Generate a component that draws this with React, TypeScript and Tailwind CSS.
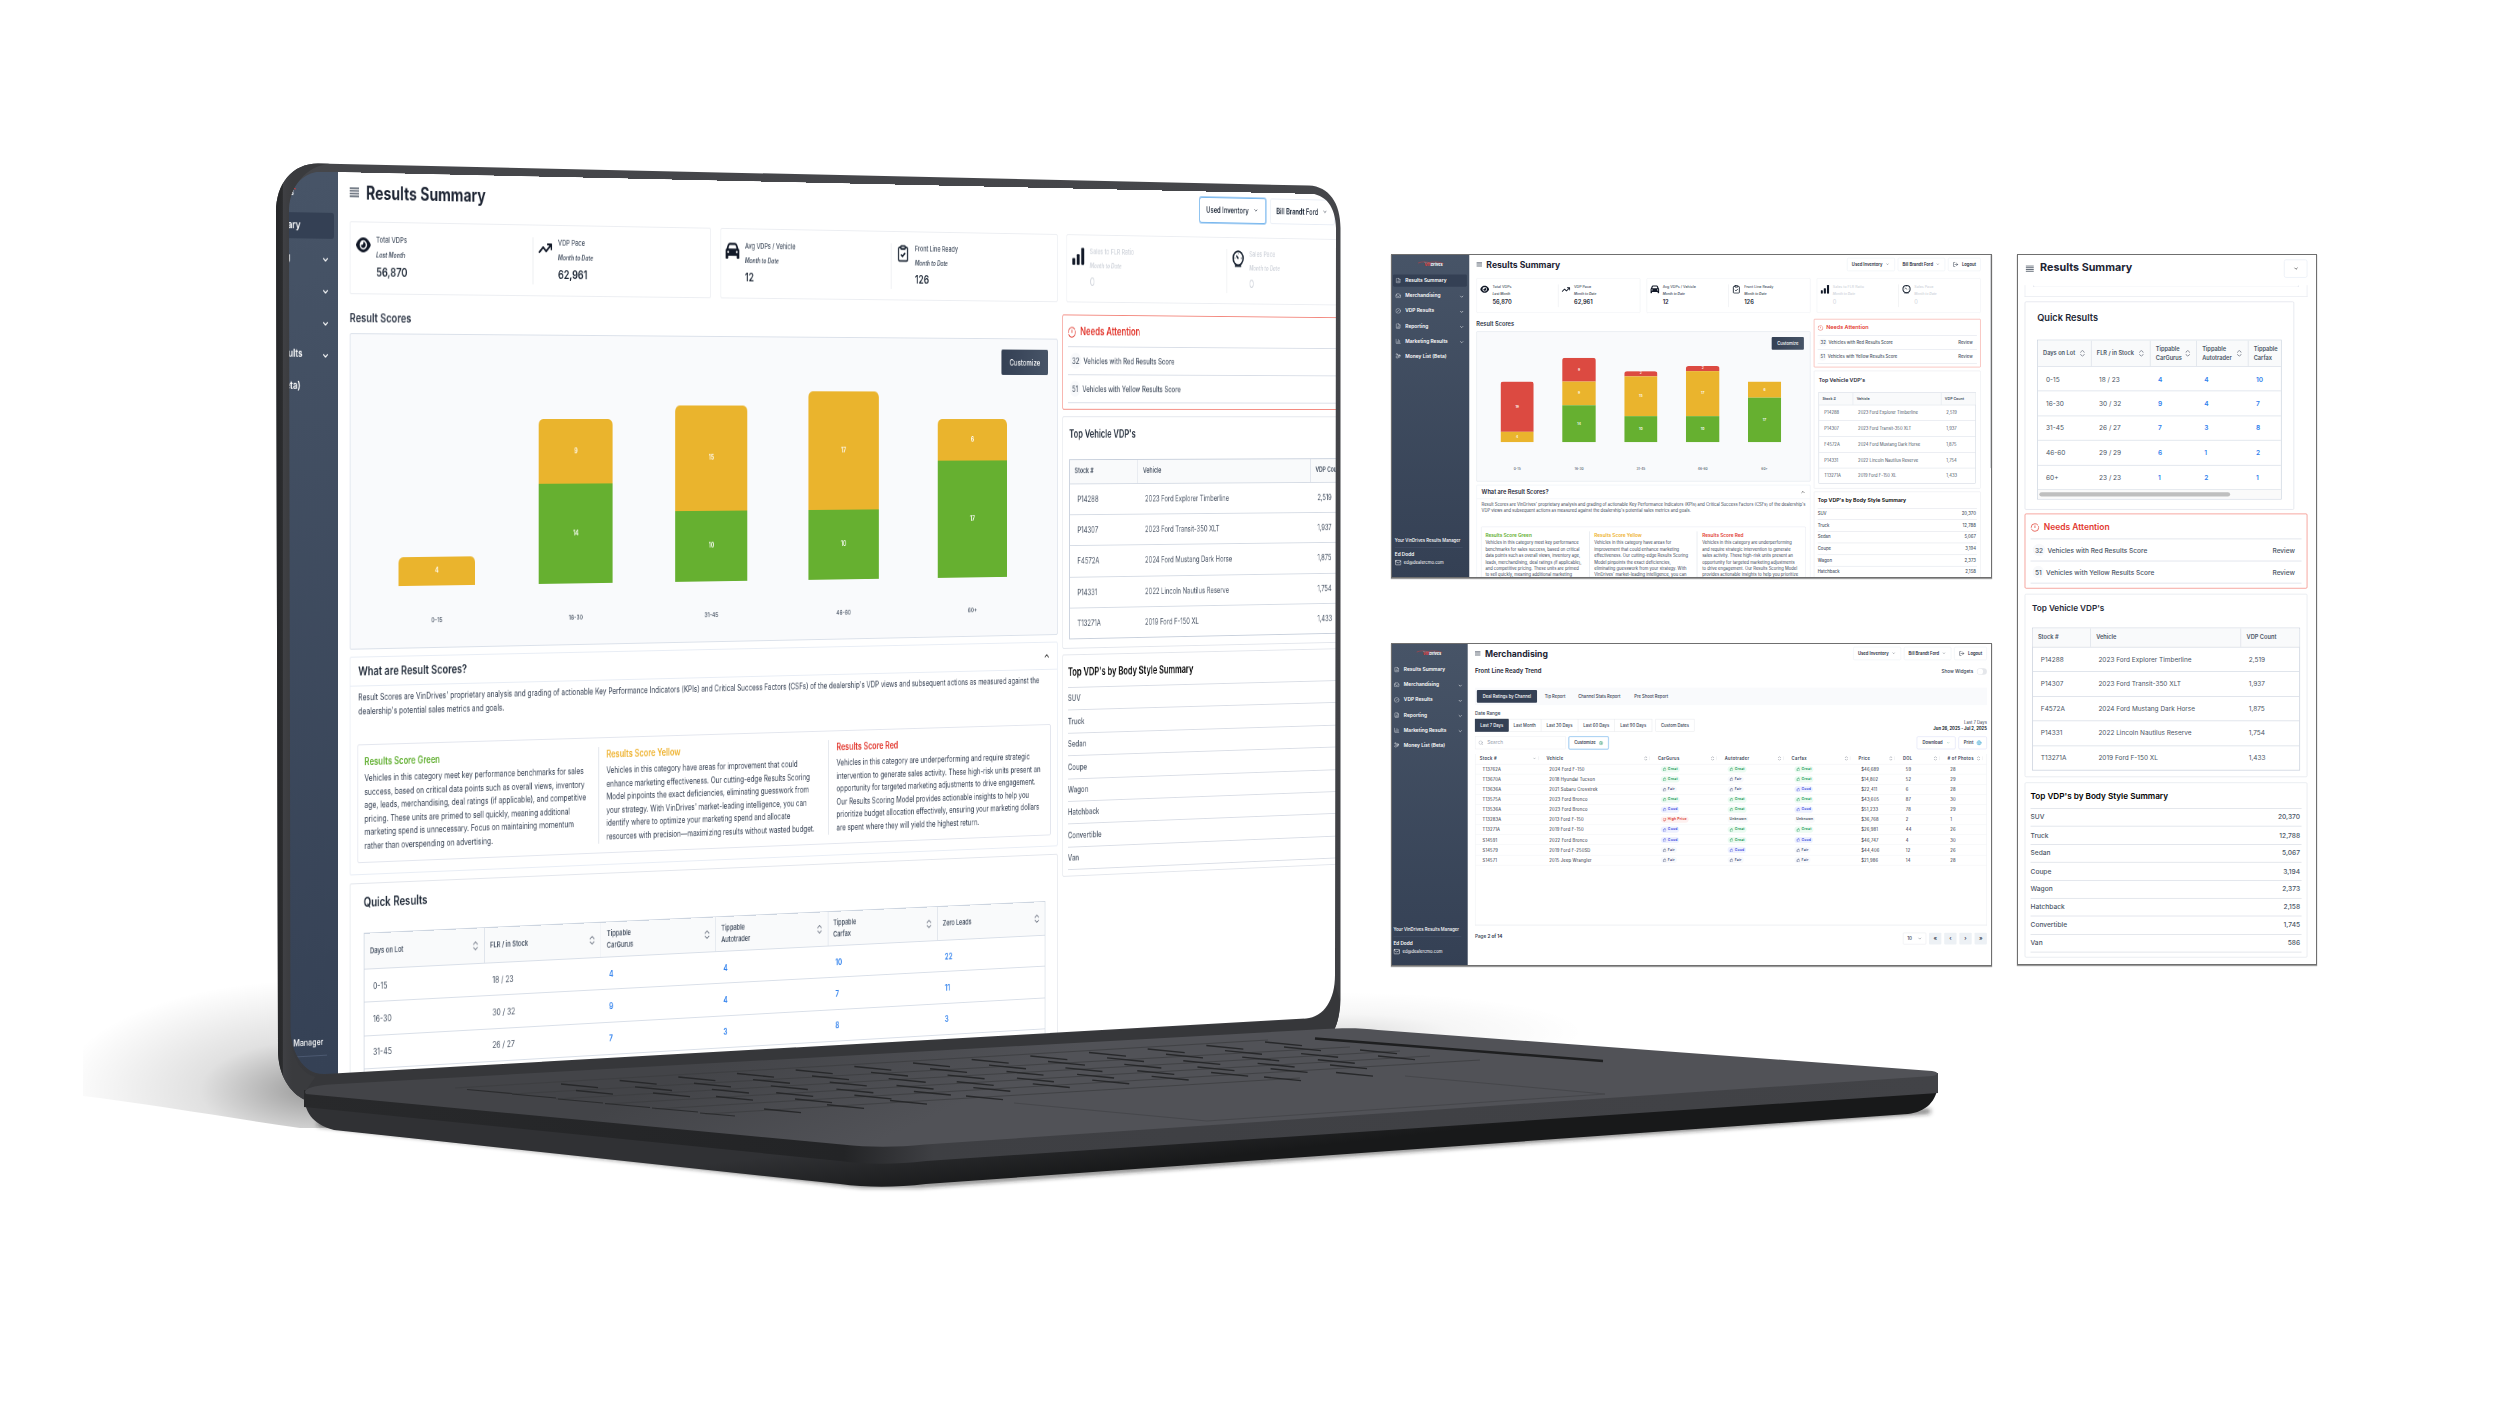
import React from "react";
import {
  ChevronDown,
  ChevronUp,
  ClipboardCheck,
  FileChartColumn,
  Inbox,
  CircleSlash,
  ChartColumn,
  HandCoins,
  LogOut,
  Mail,
  Search,
  Settings,
  Globe,
  ThumbsDown,
  ThumbsUp,
} from "lucide-react";
import { FaArrowTrendUp, FaCar, FaEye } from "react-icons/fa6";

type Bar = { label: string; red?: number; yellow: number; green?: number };

const BARS: Bar[] = [
  { label: "0-15", red: 19, yellow: 4 },
  { label: "16-30", red: 9, yellow: 9, green: 14 },
  { label: "31-45", red: 2, yellow: 15, green: 10 },
  { label: "46-60", red: 2, yellow: 17, green: 10 },
  { label: "60+", yellow: 6, green: 17 },
];

const VEHICLES = [
  ["P14288", "2023 Ford Explorer Timberline", "2,519"],
  ["P14307", "2023 Ford Transit-350 XLT", "1,937"],
  ["F4572A", "2024 Ford Mustang Dark Horse", "1,875"],
  ["P14331", "2022 Lincoln Nautilus Reserve", "1,754"],
  ["T13271A", "2019 Ford F-150 XL", "1,433"],
];

const BODY_STYLES = [
  ["SUV", "20,370"],
  ["Truck", "12,788"],
  ["Sedan", "5,067"],
  ["Coupe", "3,194"],
  ["Wagon", "2,373"],
  ["Hatchback", "2,158"],
  ["Convertible", "1,745"],
  ["Van", "586"],
];

const QUICK_HEAD = ["Days on Lot", "FLR / in Stock", "Tippable\nCarGurus", "Tippable\nAutotrader", "Tippable\nCarfax", "Zero Leads"];
const QUICK_ROWS = [
  ["0-15", "18 / 23", "4", "4", "10", "22"],
  ["16-30", "30 / 32", "9", "4", "7", "11"],
  ["31-45", "26 / 27", "7", "3", "8", "3"],
  ["46-60", "29 / 29", "6", "1", "2", "2"],
  ["60+", "23 / 23", "1", "2", "1", "1"],
];

const SCORES = [
  {
    title: "Results Score Green",
    color: "text-[#5fae2e]",
    wide: "Vehicles in this category meet key performance benchmarks for sales\nsuccess, based on critical data points such as overall views, inventory\nage, leads, merchandising, deal ratings (if applicable), and competitive\npricing. These units are primed to sell quickly, meaning additional\nmarketing spend is unnecessary. Focus on maintaining momentum\nrather than overspending on advertising.",
    narrow: "Vehicles in this category meet key performance\nbenchmarks for sales success, based on critical\ndata points such as overall views, inventory age,\nleads, merchandising, deal ratings (if applicable),\nand competitive pricing. These units are primed\nto sell quickly, meaning additional marketing",
  },
  {
    title: "Results Score Yellow",
    color: "text-[#eeb12c]",
    wide: "Vehicles in this category have areas for improvement that could\nenhance marketing effectiveness. Our cutting-edge Results Scoring\nModel pinpoints the exact deficiencies, eliminating guesswork from\nyour strategy. With VinDrives' market-leading intelligence, you can\nidentify where to optimize your marketing spend and allocate\nresources with precision—maximizing results without wasted budget.",
    narrow: "Vehicles in this category have areas for\nimprovement that could enhance marketing\neffectiveness. Our cutting-edge Results Scoring\nModel pinpoints the exact deficiencies,\neliminating guesswork from your strategy. With\nVinDrives' market-leading intelligence, you can",
  },
  {
    title: "Results Score Red",
    color: "text-[#e23c33]",
    wide: "Vehicles in this category are underperforming and require strategic\nintervention to generate sales activity. These high-risk units present an\nopportunity for targeted marketing adjustments to drive engagement.\nOur Results Scoring Model provides actionable insights to help you\nprioritize budget allocation effectively, ensuring your marketing dollars\nare spent where they will yield the highest return.",
    narrow: "Vehicles in this category are underperforming\nand require strategic intervention to generate\nsales activity. These high-risk units present an\nopportunity for targeted marketing adjustments\nto drive engagement. Our Results Scoring Model\nprovides actionable insights to help you prioritize",
  },
];

const INTRO_WIDE =
  "Result Scores are VinDrives' proprietary analysis and grading of actionable Key Performance Indicators (KPIs) and Critical Success Factors (CSFs) of the dealership's VDP views and subsequent actions as measured against the\ndealership's potential sales metrics and goals.";
const INTRO_NARROW =
  "Result Scores are VinDrives' proprietary analysis and grading of actionable Key Performance Indicators (KPIs) and Critical Success Factors (CSFs) of the dealership's\nVDP views and subsequent actions as measured against the dealership's potential sales metrics and goals.";

const LISTINGS = [
  ["T13762A", "2024 Ford F-150", "Great", "Great", "Great", "$46,689", "59", "28"],
  ["T13670A", "2018 Hyundai Tucson", "Great", "Fair", "Great", "$14,802", "52", "29"],
  ["T13636A", "2021 Subaru Crosstrek", "Fair", "Fair", "Good", "$22,411", "6", "28"],
  ["T13575A", "2023 Ford Bronco", "Great", "Great", "Great", "$43,605", "87", "30"],
  ["T13536A", "2023 Ford Bronco", "Good", "Great", "Good", "$51,233", "78", "29"],
  ["T13283A", "2013 Ford F-150", "High Price", "Unknown", "Unknown", "$36,768", "2", "1"],
  ["T13271A", "2019 Ford F-150", "Good", "Great", "Great", "$26,981", "44", "26"],
  ["S14591", "2022 Ford Bronco", "Good", "Great", "Good", "$46,747", "4", "30"],
  ["S14579", "2019 Ford F-250SD", "Fair", "Good", "Fair", "$44,406", "12", "26"],
  ["S14571", "2015 Jeep Wrangler", "Fair", "Fair", "Fair", "$21,986", "14", "28"],
];

const MenuIcon = ({ className = "" }: { className?: string }) => (
  <svg viewBox="0 0 12 10" className={className} stroke="#4b5563" strokeWidth="1.3">
    <path d="M0 1h12M0 3.6h12M0 6.3h12M0 9h12" />
  </svg>
);

const SortIcon = () => (
  <svg viewBox="0 0 6 8" className="h-[9px] w-[7px] shrink-0" fill="none" stroke="#6b7280" strokeWidth="0.9">
    <path d="M.8 3V2.4L3 .6l2.2 1.8V3M.8 5v.6L3 7.4l2.2-1.8V5" />
  </svg>
);

const BarsIcon = () => (
  <svg viewBox="0 0 12 12" className="h-[19px] w-[19px]" fill="#111827">
    <rect x="0.3" y="7.3" width="2.8" height="4.5" rx="0.6" />
    <rect x="4.4" y="4.6" width="2.8" height="7.2" rx="0.6" />
    <rect x="8.6" y="0.3" width="2.9" height="11.5" rx="0.7" />
  </svg>
);

const GaugeIcon = () => (
  <svg viewBox="0 0 18 18" className="h-[19px] w-[19px]" fill="none" stroke="#1f2937" strokeWidth="2">
    <circle cx="9" cy="8.4" r="7.2" />
    <path d="M9.400 9 6.400 5.600" strokeWidth="1.8" />
    <path d="M4.500 16.400h9" strokeWidth="2" />
    <path d="M9 3v1.200M4 8.400h1M13 8.400h1" strokeWidth="1" />
  </svg>
);

const AlertIcon = () => (
  <svg viewBox="0 0 14 14" className="h-3 w-3" fill="none" stroke="#e2453b" strokeWidth="1.2">
    <circle cx="7" cy="7" r="6" strokeDasharray="16 1.2" />
    <path d="M7 3.8v4" />
  </svg>
);

const Logo = () => (
  <div className="flex h-[38px] items-center justify-center">
    <div className="flex flex-col items-center">
      <svg viewBox="0 0 56 8" className="h-2 w-14" fill="none" strokeWidth="1">
        <path d="M1 4C10 0 18 1 24 3c10-3 20-2 31 2" stroke="#e33b3b" />
        <path d="M14 2C20 6 30 3 48 6" stroke="#d9dde3" strokeWidth=".6" />
      </svg>
      <div className="-mt-1 flex pl-3 text-[8px] leading-[8px] font-bold italic">
        <span className="text-[#e33b3b]">Vin</span>
        <span className="text-white">Drives</span>
      </div>
    </div>
  </div>
);

const NAV = [
  { name: "Results Summary", icon: FileChartColumn, open: false },
  { name: "Merchandising", icon: Inbox, open: true },
  { name: "VDP Results", icon: CircleSlash, open: true },
  { name: "Reporting", icon: FileChartColumn, open: true },
  { name: "Marketing Results", icon: ChartColumn, open: true },
  { name: "Money List (Beta)", icon: HandCoins, open: false },
];

const Sidebar = ({ active }: { active?: string }) => (
  <aside className="flex w-[163px] shrink-0 flex-col bg-gradient-to-b from-[#475467] to-[#344054] text-white">
    <Logo />
    <nav className="flex flex-col gap-[5.9px] pt-[3px] pr-[5px] pl-[2px]">
      {NAV.map((item) => (
        <div
          key={item.name}
          className={`flex h-[26px] items-center rounded-[3px] pr-1.5 pl-[5px] ${active === item.name ? "bg-[#344054]" : ""}`}
        >
          <item.icon size={12} strokeWidth={1.8} className="shrink-0 text-gray-200" />
          <span className="ml-[9px] grow text-[10.3px] font-semibold whitespace-nowrap">{item.name}</span>
          {item.open && <ChevronDown size={10} strokeWidth={2.6} className="mt-[4px]" />}
        </div>
      ))}
    </nav>
    <div className="mt-auto flex h-[86px] flex-col px-1.5 whitespace-nowrap">
      <p className="mr-2 border-b border-[#4b5870] pb-[7px] text-[9px] leading-[13px] font-medium">Your VinDrives Results Manager</p>
      <p className="mt-[7px] text-[10px] leading-[12px] font-semibold">Ed Dodd</p>
      <p className="mt-1.5 flex items-center gap-[5px] text-[8.9px] leading-[14px]">
        <Mail size={14} strokeWidth={1.8} />
        ed@dealercmo.com
      </p>
    </div>
  </aside>
);

const HeaderButton = ({ children, ring = false }: { children: React.ReactNode; ring?: boolean }) => (
  <div
    className={`flex h-7 items-center gap-[7px] rounded-[3px] border bg-white px-[9px] text-[8.8px] font-semibold whitespace-nowrap text-gray-800 ${
      ring ? "border-[#7ab8ee] ring-1 ring-[#a9d0f3]" : "border-[#e8edf5]"
    }`}
  >
    {children}
  </div>
);

const PageHeader = ({ title, ring = false }: { title: string; ring?: boolean }) => (
  <header className="flex h-[39px] shrink-0 items-center">
    <MenuIcon className="h-2.5 w-3" />
    <h1 className="mt-[2px] ml-[9px] text-[18.2px] font-bold whitespace-nowrap text-[#1d2433]">{title}</h1>
    <div className="ml-auto flex gap-1.5">
      <HeaderButton ring={ring}>
        Used Inventory <ChevronDown size={7} strokeWidth={2.5} className="mr-0.5" />
      </HeaderButton>
      <HeaderButton>
        Bill Brandt Ford <ChevronDown size={7} strokeWidth={2.5} className="mr-0.5" />
      </HeaderButton>
      <HeaderButton>
        <LogOut size={12} strokeWidth={2} />
        Logout
      </HeaderButton>
    </div>
  </header>
);

interface StatProps {
  icon: React.ReactNode;
  name: string;
  when: string;
  value: string;
  muted?: boolean;
  divider?: boolean;
}

const Stat = ({ icon, name, when, value, muted, divider }: StatProps) => (
  <div className="relative flex w-1/2 pt-[13px] pl-[6px]">
    <div className="flex h-[19px] w-[20px] items-center justify-center">{icon}</div>
    <div className={`ml-[7px] whitespace-nowrap ${muted ? "text-gray-300" : "text-gray-600"}`}>
      <p className="text-[7.7px] leading-[10px] font-medium">{name}</p>
      <p className="mt-[5px] text-[6.9px] leading-[9px] font-semibold italic">{when}</p>
      <p className={`mt-1.5 text-[12px] leading-[14px] ${muted ? "" : "font-semibold text-[#1f2937]"}`}>{value}</p>
    </div>
    {divider && <div className="my-auto ml-auto h-12 w-px -translate-y-1.5 bg-gray-200" />}
  </div>
);

const StatCards = () => (
  <div className="grid h-[73px] grid-cols-3 gap-[13px]">
    <div className="flex rounded-[2px] border border-[#eceef2]">
      <Stat icon={<FaEye size={19} color="#111827" />} name="Total VDPs" when="Last Month" value="56,870" divider />
      <Stat icon={<FaArrowTrendUp size={18} color="#111827" />} name="VDP Pace" when="Month to Date" value="62,961" />
    </div>
    <div className="flex rounded-[2px] border border-[#eceef2]">
      <Stat icon={<FaCar size={19} color="#111827" />} name="Avg VDPs / Vehicle" when="Month to Date" value="12" divider />
      <Stat
        icon={<ClipboardCheck size={19} strokeWidth={2.4} color="#1f2937" />}
        name="Front Line Ready"
        when="Month to Date"
        value="126"
      />
    </div>
    <div className="flex rounded-[2px] border border-[#eceef2]">
      <Stat icon={<BarsIcon />} name="Sales to FLR Ratio" when="Month to Date" value="0" muted divider />
      <Stat icon={<GaugeIcon />} name="Sales Pace" when="Month to Date" value="0" muted />
    </div>
  </div>
);

const Segment = ({ value, unit, className }: { value?: number; unit: number; className: string }) =>
  value ? (
    <div
      className={`flex items-center justify-center text-[7px] font-semibold text-white ${className}`}
      style={{ height: value * unit }}
    >
      {value}
    </div>
  ) : null;

const ScoreChart = ({ wide }: { wide: boolean }) => {
  const unit = wide ? 7.3 : 5.55;
  return (
    <div className="relative flex h-[317px] rounded-[2px] border border-[#dbe1ea] bg-[#f9fafc] pr-[31px] pl-5">
      <div className="absolute top-[11px] right-[13px] flex h-[27px] w-[68px] items-center justify-center rounded-[2px] bg-gradient-to-r from-[#344054] to-[#475467] text-[8.8px] font-medium text-white">
        Customize
      </div>
      {BARS.map((bar) => (
        <div key={bar.label} className={`flex w-1/5 flex-col items-center justify-end ${wide ? "pb-[22px]" : "pb-[20px]"}`}>
          <div className={`flex w-[54%] flex-col overflow-hidden ${bar.red || wide ? "rounded-t-[6px]" : ""}`}>
            {!wide && <Segment value={bar.red} unit={unit} className="bg-[#dc4a41]" />}
            <Segment value={bar.yellow} unit={unit} className="bg-[#eab42d]" />
            <Segment value={bar.green} unit={unit} className="bg-[#66b030]" />
          </div>
          <p className={`text-[6.8px] leading-[10px] font-medium text-gray-600 ${wide ? "mt-[30px]" : "mt-[52px]"}`}>{bar.label}</p>
        </div>
      ))}
    </div>
  );
};

const ScoreInfo = ({ wide }: { wide: boolean }) => (
  <div className="h-[219px] shrink-0 rounded-[2px] border border-[#e8edf5]">
    <div className="flex h-[29px] items-center justify-between border-b border-[#e8edf5] px-[10px]">
      <h2 className="text-[12px] font-semibold text-[#1f2937]">What are Result Scores?</h2>
      <ChevronUp size={10} strokeWidth={2.5} />
    </div>
    <p className="mt-[5px] h-[53px] px-[10px] text-[8.74px] leading-[13.5px] whitespace-pre text-gray-700">
      {wide ? INTRO_WIDE : INTRO_NARROW}
    </p>
    <div className="mx-[9px] flex h-[119px] rounded-[2px] border border-[#e3e6ee] py-[9px]">
      {SCORES.map((score, i) => (
        <div key={score.title} className={`w-1/3 pl-[8px] ${i < 2 ? "border-r border-[#d5dae3]" : ""} ${i > 0 ? "pl-[10px]" : ""}`}>
          <h3 className={`text-[10px] leading-[14px] font-semibold ${score.color}`}>{score.title}</h3>
          <p className="mt-[4px] text-[8.74px] leading-[13.5px] whitespace-pre text-gray-700">{wide ? score.wide : score.narrow}</p>
        </div>
      ))}
    </div>
  </div>
);

const QuickTable = ({ cols, clip = false }: { cols: string; clip?: boolean }) => (
  <div className="overflow-hidden border border-[#cdd5e0] text-[8.9px] text-gray-600">
    <div className={`grid h-[35px] bg-[#f9fafb] ${cols}`}>
      {QUICK_HEAD.slice(0, clip ? 5 : 6).map((head, i) => (
        <div key={head} className={`flex items-center justify-between pr-2 pl-[7px] ${i > 0 ? "border-l border-[#dce1e9]" : ""}`}>
          <span className="text-[7.7px] leading-[11.5px] font-semibold whitespace-pre text-gray-600">{head}</span>
          {!(clip && i === 4) && <SortIcon />}
        </div>
      ))}
    </div>
    {QUICK_ROWS.map((row) => (
      <div key={row[0]} className={`grid h-[33.4px] items-center border-t border-[#d9dfe8] ${cols}`}>
        {row.slice(0, clip ? 5 : 6).map((cell, i) => (
          <span key={i} className={`pl-[11px] ${i > 1 ? "font-semibold text-[#2f80ed]" : ""}`}>
            {cell}
          </span>
        ))}
      </div>
    ))}
    {clip && (
      <div className="flex h-[13px] items-center border-t border-[#dfe4eb] bg-[#fafafa] px-0.5">
        <div className="h-[6.5px] w-[259px] rounded-full bg-[#bfbfbf]" />
      </div>
    )}
  </div>
);

const NeedsAttention = () => (
  <div className="flex h-[102px] flex-col rounded-[2px] border border-[#f3897f] px-[7px] text-[8.9px] font-medium text-gray-600">
    <div className="flex h-[33px] items-center gap-1.5 pt-[2px]">
      <AlertIcon />
      <h2 className="text-[11.5px] font-semibold text-[#e2382f]">Needs Attention</h2>
    </div>
    {[
      ["32", "Vehicles with Red Results Score"],
      ["51", "Vehicles with Yellow Results Score"],
    ].map(([count, text]) => (
      <div key={count} className="flex h-[30px] items-center border-t border-[#d9dee7] pl-[3px] pr-[9px]">
        <span className="rounded-full bg-[#f8f9fb] px-[3px] py-0.5">{count}</span>
        <span className="ml-[3px] grow whitespace-nowrap">{text}</span>
        <span>Review</span>
      </div>
    ))}
    <div className="border-t border-[#d9dee7]" />
  </div>
);

const TopVehicles = () => (
  <div className="flex h-[249px] flex-col rounded-[2px] border border-[#e3e6ec] px-[9px] text-[8.8px] text-gray-600">
    <h2 className="flex h-[45px] items-center pb-[7px] text-[11.1px] font-semibold text-[#1f2937]">Top Vehicle VDP's</h2>
    <div className="border border-[#c8d0dc]">
      <div className="grid h-[25px] grid-cols-[21.6%_56.4%_22%] bg-[#f9fafb] text-[7.7px] font-semibold text-gray-600">
        {["Stock #", "Vehicle", "VDP Count"].map((head, i) => (
          <span key={head} className={`flex items-center pl-[7px] whitespace-nowrap ${i > 0 ? "border-l border-[#dce1e9]" : ""}`}>
            {head}
          </span>
        ))}
      </div>
      {VEHICLES.map((row) => (
        <div key={row[0]} className="grid h-[33.4px] grid-cols-[21.6%_56.4%_22%] items-center border-t border-[#d6dce5] pb-px">
          {row.map((cell) => (
            <span key={cell} className="pl-[11px] whitespace-nowrap">
              {cell}
            </span>
          ))}
        </div>
      ))}
    </div>
  </div>
);

const BodyStyles = () => (
  <div className="flex h-[238px] shrink-0 flex-col rounded-[2px] border border-[#e3e6ec] px-[7px] text-[9px] font-medium text-gray-600">
    <h2 className="flex h-[34px] items-center pt-[3px] text-[11.1px] font-semibold text-black">Top VDP's by Body Style Summary</h2>
    {BODY_STYLES.map(([name, count]) => (
      <div key={name} className="flex h-[24.4px] items-center justify-between border-t border-[#dadee6] pr-[2px] pb-px">
        <span>{name}</span>
        <span>{count}</span>
      </div>
    ))}
    <div className="border-t border-[#dadee6]" />
  </div>
);

const SummaryPage = ({ wide = false }: { wide?: boolean }) => (
  <div className={`flex bg-white ${wide ? "h-[948px] w-[1663px]" : "h-[682px] w-[1265px]"}`}>
    <Sidebar active="Results Summary" />
    <main className="flex grow flex-col overflow-hidden pr-[20px] pl-[15px]">
      <PageHeader title="Results Summary" ring={wide} />
      <div className="mt-[10px] shrink-0">
        <StatCards />
      </div>
      <div className="grid shrink-0 grid-cols-[2fr_1fr] gap-[7px]">
        <div className="flex flex-col">
          <h2 className="flex h-[39px] items-center pt-2 text-[12px] font-semibold text-[#2b3444]">Result Scores</h2>
          <ScoreChart wide={wide} />
          <div className="mt-[7px]">
            <ScoreInfo wide={wide} />
          </div>
          <div className="mt-2 rounded-[2px] border border-[#e3e6ec] px-[17px] pb-4">
            <h2 className="flex h-[49px] items-center pb-2.5 text-[12.5px] font-semibold text-[#1f2937]">Quick Results</h2>
            <QuickTable cols="grid-cols-6" />
          </div>
        </div>
        <div className="flex flex-col gap-[6.5px] pt-[13px]">
          <NeedsAttention />
          <TopVehicles />
          <BodyStyles />
        </div>
      </div>
    </main>
    {!wide && <div className="h-[450px] w-[3px] shrink-0 rounded-full bg-[#c9ccd1]" />}
  </div>
);

const BADGES: Record<string, string> = {
  Great: "bg-[#ecfbf2] text-[#1a9a56]",
  Good: "bg-[#eef1ff] text-[#4453e0]",
  Fair: "bg-[#f8f9fc] text-[#44507a]",
  "High Price": "bg-[#fef1f0] text-[#d93a30]",
  Unknown: "bg-[#f8f9fb] text-[#4b5563]",
};

const Badge = ({ value }: { value: string }) => (
  <span className={`inline-flex h-[13px] items-center gap-[3px] rounded-full px-1 text-[7.3px] font-semibold ${BADGES[value]}`}>
    {value === "High Price" && <ThumbsDown size={8} />}
    {["Great", "Good", "Fair"].includes(value) && <ThumbsUp size={8} />}
    {value}
  </span>
);

const MERCH_COLS = "grid-cols-[141px_235px_141px_141px_141px_94px_94px_1fr]";

const MerchandisingPage = () => (
  <div className="flex h-[682px] w-[1265px] bg-white">
    <div className="flex w-[160px] shrink-0 overflow-hidden">
      <div className="-ml-[3px] flex">
        <Sidebar />
      </div>
    </div>
    <main className="flex grow flex-col pr-[10px] pl-[15px] text-[8.8px] font-medium text-gray-700">
      <PageHeader title="Merchandising" />
      <div className="flex h-[38px] items-center justify-between">
        <h2 className="text-[12.6px] font-semibold text-[#1f2937]">Front Line Ready Trend</h2>
        <div className="flex items-center gap-2 text-[9.7px]">
          Show Widgets
          <div className="flex h-3.5 w-[21px] rounded-full bg-gray-200 p-px">
            <div className="h-3 w-3 rounded-full bg-white" />
          </div>
        </div>
      </div>
      <div className="mt-[15px] flex h-[37px] items-center bg-[#f9fafc] pl-1 whitespace-nowrap">
        <span className="flex h-[27px] w-[127px] items-center justify-center rounded-[2px] bg-[#344054] text-white">Deal Ratings by Channel</span>
        <span className="ml-4 w-[71px]">Tip Report</span>
        <span className="w-[118px]">Channel Stats Report</span>
        <span>Pre Shoot Report</span>
      </div>
      <div className="flex h-[55px] justify-between">
        <div>
          <p className="mt-2.5 text-[9.8px] leading-[14px]">Date Range</p>
          <div className="mt-[5px] flex h-[27px] text-center leading-[25px] whitespace-nowrap">
            <span className="w-[71px] border border-[#344054] bg-[#344054] text-white">Last 7 Days</span>
            <span className="w-[69px] border border-l-0 border-gray-200">Last Month</span>
            <span className="w-[78px] border border-l-0 border-gray-200">Last 30 Days</span>
            <span className="w-[77px] border border-l-0 border-gray-200">Last 60 Days</span>
            <span className="w-[79px] border border-l-0 border-gray-200">Last 90 Days</span>
            <span className="ml-[7px] w-[82px] border border-gray-200">Custom Dates</span>
          </div>
        </div>
        <div className="self-end text-right leading-[13px]">
          <p className="font-normal">Last 7 Days</p>
          <p className="font-bold text-gray-900">Jun 26, 2025 - Jul 2, 2025</p>
        </div>
      </div>
      <div className="mt-[11px] flex h-[27px] font-semibold">
        <div className="flex w-[191px] items-center gap-2 border border-[#eceef2] pl-1.5 text-[10px] font-normal text-gray-400">
          <Search size={11} />
          Search
        </div>
        <div className="ml-[7px] flex w-[84px] items-center justify-center gap-1.5 rounded-[3px] border border-[#7ab8ee] ring-1 ring-[#a9d0f3]">
          Customize <Settings size={10} color="#22946b" />
        </div>
        <div className="ml-auto flex w-[82px] items-center justify-center gap-2 rounded-[3px] border border-[#d5d8f5]">
          Download <ChevronDown size={7} color="#22946b" />
        </div>
        <div className="ml-1.5 flex w-[60px] items-center justify-center gap-1.5 rounded-[3px] border border-[#d5d8f5]">
          Print <Globe size={11} color="#2b9fd0" />
        </div>
      </div>
      <div className="mt-[10px] flex h-[362px] flex-col border border-t-0 border-b-2 border-[#edeff2]">
        <div className={`grid h-[22px] items-center border-b border-[#eceef1] pb-[3px] text-[8.8px] font-semibold tracking-[0.07em] ${MERCH_COLS}`}>
          {["Stock #", "Vehicle", "CarGurus", "Autotrader", "Carfax", "Price", "DOL", "# of Photos"].map((head, i) => (
            <div key={head} className="flex items-center justify-between pr-[8px] pl-[9px] whitespace-nowrap">
              {head}
              <span className="flex items-center gap-1">
                {i === 0 ? <ChevronDown size={7} /> : <SortIcon />}
                <i className="h-2 w-px bg-gray-200" />
              </span>
            </div>
          ))}
        </div>
        {LISTINGS.map((row) => (
          <div
            key={row[0]}
            className={`grid h-[21.3px] items-center border-b border-[#f0f2f4] font-normal tracking-[0.04em] text-gray-800 ${MERCH_COLS}`}
          >
            {row.map((cell, i) => (
              <div key={i} className="flex pl-[15px] whitespace-nowrap">
                {i > 1 && i < 5 ? <Badge value={cell} /> : cell}
              </div>
            ))}
          </div>
        ))}
      </div>
      <div className="mt-3.5 flex h-[26px] items-center gap-[6px] text-[9.8px]">
        <p className="mr-auto pb-1.5">
          Page <b>2 of 14</b>
        </p>
        <span className="flex h-[25px] w-[49px] items-center justify-center gap-3 rounded-[2px] border border-gray-200">
          10 <ChevronDown size={9} />
        </span>
        {["«", "‹", "›", "»"].map((glyph) => (
          <span key={glyph} className="flex h-[25px] w-[26px] items-center justify-center rounded-[2px] bg-[#edf1f5] pb-0.5 text-[12px] font-semibold">
            {glyph}
          </span>
        ))}
      </div>
    </main>
  </div>
);

const MobilePage = () => (
  <div className="h-[966px] w-[404px] bg-white pr-[11px] pl-[9px]">
    <header className="flex h-[41px] items-center pb-[5px]">
      <MenuIcon className="ml-px h-[9px] w-[12px]" />
      <h1 className="ml-[8px] text-[14.6px] font-bold text-[#1d2433]">Results Summary</h1>
      <div className="ml-auto flex h-[25px] w-[32px] items-center justify-center rounded-[3px] border border-[#e8edf5]">
        <ChevronDown size={7} strokeWidth={2.5} />
      </div>
    </header>
    <div className="h-4 border border-t-0 border-[#e8ebf1] px-2.5">
      <div className="h-[3px] rounded-b border border-t-0 border-[#e3e6ee]" />
    </div>
    <div className="mt-1.5 mr-[18px] h-[283px] rounded-[2px] border border-[#dfe3ea] px-[16px]">
      <h2 className="flex h-[51px] items-center pb-2 text-[12.5px] font-semibold text-[#1f2937]">Quick Results</h2>
      <QuickTable cols="grid-cols-[72px_80px_63px_70px_1fr]" clip />
    </div>
    <div className="mt-[5px] flex flex-col gap-[7px]">
      <NeedsAttention />
      <TopVehicles />
      <BodyStyles />
    </div>
  </div>
);

// Rows of key edges on the deck: first edge, last edge, number of keys
const KEY_ROWS = [
  [561, 1084, 1265, 1042, 13],
  [576, 1090.5, 1284, 1047, 13],
  [653, 1093, 1360, 1050, 13],
  [716, 1096.5, 1378, 1056, 12],
  [795, 1099, 1330, 1065, 10],
  [764, 1109, 890, 1100.5, 3],
  [966, 1096, 966, 1096, 1],
  [1264, 1077, 1336, 1072.5, 2],
];

const Laptop = () => (
  <svg className="absolute top-0 left-0" width="2500" height="1406" viewBox="0 0 2500 1406" fill="none">
    <defs>
      <linearGradient id="lid" x1="0" y1="160" x2="0" y2="1100" gradientUnits="userSpaceOnUse">
        <stop stopColor="#45464a" />
        <stop offset="0.85" stopColor="#3f4044" />
        <stop offset="1" stopColor="#353639" />
      </linearGradient>
      <linearGradient id="edge" x1="276" y1="0" x2="292" y2="0" gradientUnits="userSpaceOnUse">
        <stop stopColor="#252628" />
        <stop offset="0.4" stopColor="#2b2c2e" />
        <stop offset="0.45" stopColor="#3f4044" />
        <stop offset="1" stopColor="#3a3b3e" />
      </linearGradient>
      <linearGradient id="deck" x1="800" y1="1020" x2="860" y2="1150" gradientUnits="userSpaceOnUse">
        <stop stopColor="#434448" />
        <stop offset="1" stopColor="#515257" />
      </linearGradient>
      <linearGradient id="front" x1="305" y1="0" x2="1937" y2="0" gradientUnits="userSpaceOnUse">
        <stop stopColor="#28292b" />
        <stop offset="0.33" stopColor="#232426" />
        <stop offset="0.385" stopColor="#3e3f43" />
        <stop offset="1" stopColor="#424347" />
      </linearGradient>
      <linearGradient id="under" x1="1000" y1="1130" x2="1006" y2="1182" gradientUnits="userSpaceOnUse">
        <stop stopColor="#303134" />
        <stop offset="1" stopColor="#18191a" />
      </linearGradient>
      <radialGradient id="shade">
        <stop stopColor="#000" stopOpacity="0.4" />
        <stop offset="0.45" stopColor="#000" stopOpacity="0.12" />
        <stop offset="1" stopColor="#000" stopOpacity="0" />
      </radialGradient>
      <filter id="soft" x="-10%" y="-30%" width="120%" height="160%">
        <feGaussianBlur stdDeviation="2.5" />
      </filter>
      <clipPath id="floor">
        <path d="M83 960V1096C150 1104 230 1118 300 1128H500V960z" />
      </clipPath>
    </defs>
    <ellipse cx="315" cy="1090" rx="255" ry="110" fill="url(#shade)" clipPath="url(#floor)" />
    <ellipse cx="1345" cy="1032" rx="240" ry="40" fill="url(#shade)" opacity="0.3" />
    <path d="M318 1124L862 1185L920 1185L1930 1111" stroke="#222" strokeWidth="3" filter="url(#soft)" />
    {/* lid */}
    <path
      d="M276 212C276 184 292 163.500 318 163.500L1309 185.500C1329 186.500 1340.500 203 1340.500 228V1000C1340 1015 1337 1025 1333 1032L305 1100C290 1093 278 1075 278 1050z"
      fill="url(#lid)"
    />
    <path d="M276 212C276 184 292 163.500 318 163.500L330 163.800C306 166 289 186 289 214L290.500 1035C291 1055 300 1074 316 1077L305 1100C290 1093 278 1075 278 1050z" fill="url(#edge)" />
    <path d="M316 1076L1306 1019.500C1322 1018 1332 1006 1335 985L1340 1000C1340 1015 1337 1025 1333 1032L305 1092z" fill="#36373a" />
    {/* base */}
    <path
      d="M304 1092C304 1112 312 1124 334 1130L840 1184C866 1187.500 896 1187.500 926 1184L1908 1114C1926 1112 1937 1101 1938 1084V1074L880 1140z"
      fill="url(#under)"
    />
    <path d="M304 1090V1107L840 1161C866 1164.500 896 1164.500 926 1161L1938 1093V1073L880 1130z" fill="url(#front)" />
    <path
      d="M306 1094C302 1090 310 1086 330 1084.500L1325 1029C1345 1027.500 1362 1028 1378 1030L1932 1071C1939 1072 1939 1075 1932 1076L925 1144.500C896 1147.500 870 1147.500 842 1144.500z"
      fill="url(#deck)"
    />
    <path d="M455 1088L1268 1040M512 1094L1350 1047M556 1099L1400 1051M605 1104L1430 1056M655 1109L1480 1060M705 1114L1300 1078" stroke="#3c3d40" strokeWidth="0.8" />
    <path d="M467 1089.500L512 1093.500M512 1094L556 1098M558 1099L603 1103M605 1103.500L650 1107.500M652 1108L698 1112M700 1113L735 1116" stroke="#2b2c2e" strokeWidth="1.2" />
    {KEY_ROWS.map(([x1, y1, x2, y2, count], row) =>
      Array.from({ length: count }, (_, i) => {
        const t = count > 1 ? i / (count - 1) : 0;
        const x = x1 + (x2 - x1) * t;
        const y = y1 + (y2 - y1) * t;
        return <path key={`${row}-${i}`} d={`M${x} ${y}l37 3.600`} stroke="#27282a" strokeWidth="1.4" />;
      })
    )}
    <path d="M1315 1038.500L1603 1061" stroke="#1e1f20" strokeWidth="2.4" />
    <path d="M1014 1103L1207 1121L1605 1094L1405 1076" stroke="#46474b" strokeWidth="1" />
  </svg>
);

const App: React.FC = () => (
  <div className="relative h-[1406px] w-[2500px] overflow-hidden bg-white font-['Inter',sans-serif]">
    <Laptop />
    <div className="absolute inset-0 [clip-path:path('M289_212C289_190_300_172_322_171.5L1308_193.300C1326_194_1335.5_207_1336_228L1335_975C1335_1000_1324_1017_1306_1018.5L325_1074C302_1075_291_1050_290.5_1030Z')]">
      <div className="w-[1663px] origin-top-left [transform:matrix3d(0.8039,0.02969,0,0.00007069,0,1,0,0,0,0,1,0,206.964,167.16,0,0.988478)]">
        <SummaryPage wide />
      </div>
    </div>

    <div className="relative flex gap-[25px] pt-[254px] pl-[1391px]">
      <div className="flex flex-col gap-[65px]">
        <div className="h-[324px] w-[601px] overflow-hidden border border-[#6f6f6f] shadow-[0_1px_1px_#9a9a9a]">
          <div className="w-[1265px] origin-top-left scale-[0.474]">
            <SummaryPage />
          </div>
        </div>
        <div className="h-[323px] w-[601px] overflow-hidden border border-[#6f6f6f] shadow-[0_1px_1px_#9a9a9a]">
          <div className="w-[1265px] origin-top-left scale-[0.474]">
            <MerchandisingPage />
          </div>
        </div>
      </div>
      <div className="h-[711px] w-[300px] overflow-hidden border border-[#6f6f6f] shadow-[0_1px_1px_#9a9a9a]">
        <div className="w-[404px] origin-top-left scale-[0.7365]">
          <MobilePage />
        </div>
      </div>
    </div>
  </div>
);

export default App;
